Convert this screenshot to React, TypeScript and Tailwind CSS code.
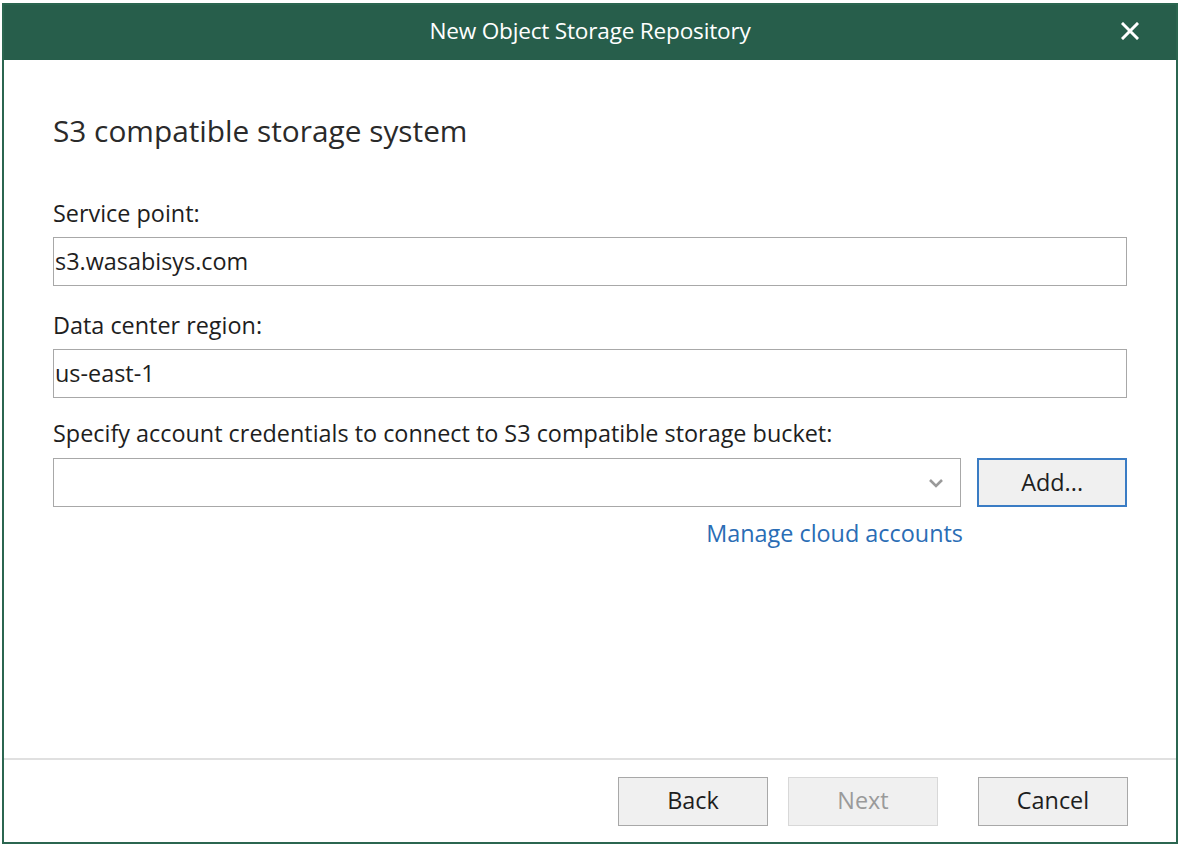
import React from 'react';

const font = { fontFamily: '"Open Sans", "Noto Sans", sans-serif' };

const Field: React.FC<{ label: string; value: string }> = ({ label, value }) => (
  <div className="flex flex-col">
    <div className="h-[28px] text-[23.4px] leading-[28px] text-[#1e1e1e]">{label}</div>
    <div className="mt-[10px] h-[49px] border border-[#a8a8a8] bg-white px-[1px] flex items-center text-[23.4px] text-[#1e1e1e]">
      {value}
    </div>
  </div>
);

export default function App() {
  return (
    <div className="w-[1188px] h-[846px] bg-white pt-[3px] pl-[2px]" style={font}>
      <div className="w-[1176px] h-[841px] border-2 border-[#2b6650] flex flex-col bg-white">
        {/* Title bar */}
        <div className="h-[55px] bg-[#275e4b] relative flex items-center justify-center pb-[3px]">
          <span className="text-white text-[22.6px] tracking-[-0.2px]">New Object Storage Repository</span>
          <svg className="absolute right-[37px] top-[17px]" width="18" height="18" viewBox="0 0 18 18">
            <path d="M2 2 L16 16 M16 2 L2 16" stroke="white" strokeWidth="3" strokeLinecap="square" />
          </svg>
        </div>

        {/* Body */}
        <div className="flex-1 px-[49px] pt-[53px]">
          <div className="text-[29.8px] leading-[36px] text-[#2a2a2a]">S3 compatible storage system</div>

          <div className="mt-[50px] flex flex-col gap-[25px]">
            <Field label="Service point:" value="s3.wasabisys.com" />
            <Field label="Data center region:" value="us-east-1" />
          </div>

          <div className="mt-[21px] h-[28px] text-[23.4px] leading-[28px] text-[#1e1e1e] whitespace-nowrap">
            Specify account credentials to connect to S3 compatible storage bucket:
          </div>
          <div className="mt-[11px] flex gap-[16px]">
            <div className="w-[910px] h-[49px] border border-[#a8a8a8] bg-white flex items-center justify-end pr-[16px]">
              <svg width="16" height="10" viewBox="0 0 16 10">
                <path d="M2 2 L8 8 L14 2" fill="none" stroke="#9a9a9a" strokeWidth="2.6" />
              </svg>
            </div>
            <button className="w-[150px] h-[49px] border-2 border-[#3a7cc4] bg-[#f0f0f0] text-[23.4px] text-[#1e1e1e]">
              Add...
            </button>
          </div>
          <div className="w-[910px] mt-[12px] flex justify-end">
            <span className="text-[23.4px] leading-[28px] text-[#2a6db5]">Manage cloud accounts</span>
          </div>
        </div>

        {/* Footer */}
        <div className="h-[84px] border-t-2 border-[#e0e0e0] flex items-center justify-end gap-[20px] pr-[48px]">
          <button className="w-[150px] h-[49px] border border-[#a8a8a8] bg-[#f0f0f0] text-[23.4px] text-[#1e1e1e]">
            Back
          </button>
          <button className="w-[150px] h-[49px] border border-[#d8d8d8] bg-[#f0f0f0] text-[23.4px] text-[#9a9a9a] mr-[20px]">
            Next
          </button>
          <button className="w-[150px] h-[49px] border border-[#a8a8a8] bg-[#f0f0f0] text-[23.4px] text-[#1e1e1e]">
            Cancel
          </button>
        </div>
      </div>
    </div>
  );
}
